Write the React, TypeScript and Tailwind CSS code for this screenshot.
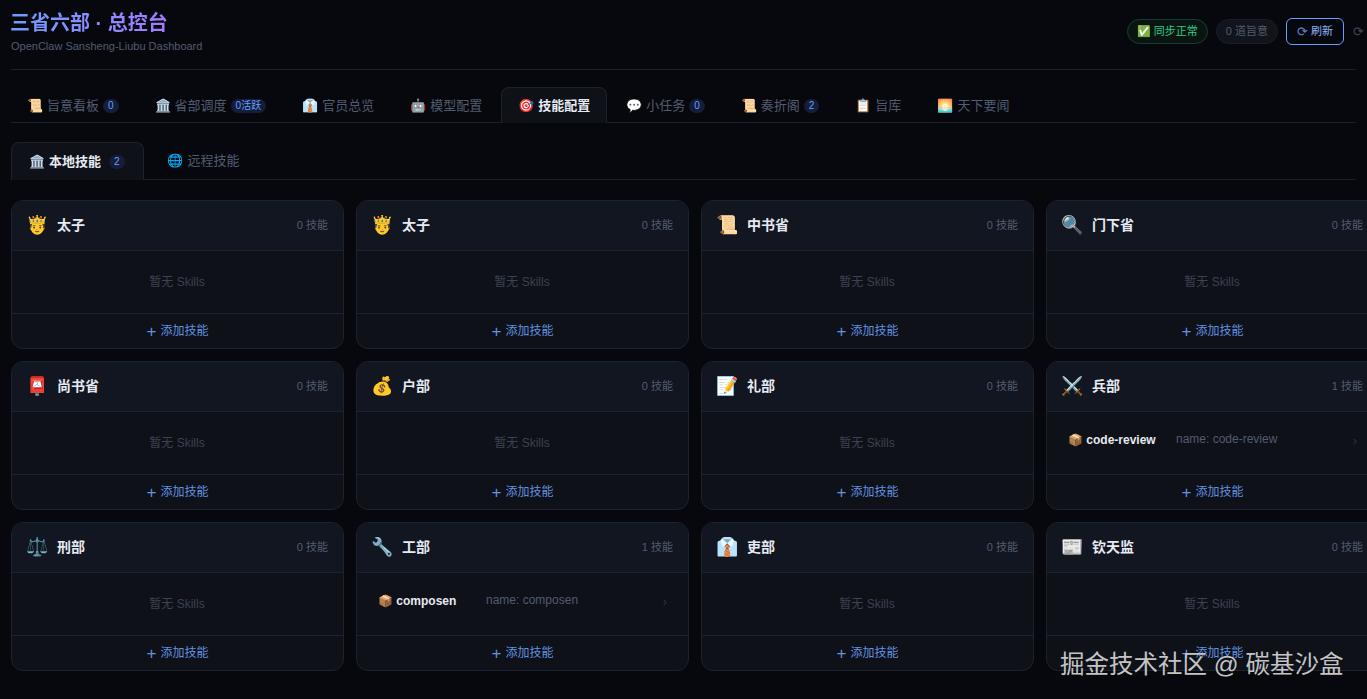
const FONT = '[font-family:"Liberation_Sans","Noto_Sans_CJK_SC",sans-serif]';

type Skill = { name: string; desc: string };
type Dept = { icon: string; name: string; skills: Skill[] };

const TABS = [
  { icon: '📜', label: '旨意看板', badge: '0' },
  { icon: '🏛️', label: '省部调度', badge: '0活跃' },
  { icon: '👔', label: '官员总览' },
  { icon: '🤖', label: '模型配置' },
  { icon: '🎯', label: '技能配置', active: true },
  { icon: '💬', label: '小任务', badge: '0' },
  { icon: '📜', label: '奏折阁', badge: '2' },
  { icon: '📋', label: '旨库' },
  { icon: '🌅', label: '天下要闻' },
];

const DEPTS: Dept[] = [
  { icon: '🤴', name: '太子', skills: [] },
  { icon: '🤴', name: '太子', skills: [] },
  { icon: '📜', name: '中书省', skills: [] },
  { icon: '🔍', name: '门下省', skills: [] },
  { icon: '📮', name: '尚书省', skills: [] },
  { icon: '💰', name: '户部', skills: [] },
  { icon: '📝', name: '礼部', skills: [] },
  { icon: '⚔️', name: '兵部', skills: [{ name: 'code-review', desc: 'name: code-review' }] },
  { icon: '⚖️', name: '刑部', skills: [] },
  { icon: '🔧', name: '工部', skills: [{ name: 'composen', desc: 'name: composen' }] },
  { icon: '👔', name: '吏部', skills: [] },
  { icon: '📰', name: '钦天监', skills: [] },
];

const DeptCard = ({ dept }: { dept: Dept }) => (
  <div className="h-[149px] w-[333px] rounded-xl border border-[#1c2230] bg-[#0e1118] overflow-hidden flex flex-col">
    <div className="h-[50px] shrink-0 flex items-center px-[15px] pb-[1px] bg-[#121620] border-b border-[#1c2230]">
      <span className="-ml-px w-[31px] text-[18px] leading-none">{dept.icon}</span>
      <span className="text-sm font-bold text-[#e6eaf2]">{dept.name}</span>
      <span className="ml-auto text-[11px] text-[#525c70]">{dept.skills.length} 技能</span>
    </div>
    <div className="h-[62px] shrink-0 flex flex-col justify-center">
      {dept.skills.length === 0 ? (
        <div className="text-center pr-[1px] text-xs text-[#3b4250]">暂无 Skills</div>
      ) : (
        dept.skills.map((s) => (
          <div key={s.name} className="flex items-center pl-[21px] pr-[21px] pb-[7px]">
            <span className="text-xs font-bold text-[#e6eaf2] w-[108px] shrink-0 whitespace-nowrap">
              📦 {s.name}
            </span>
            <span className="text-xs text-[#525c70] -mt-[2px]">{s.desc}</span>
            <span className="ml-auto text-xs text-[#2f3644] mt-[3px]">›</span>
          </div>
        ))
      )}
    </div>
    <div className="flex-1 flex items-center justify-center gap-1 border-t border-[#1c2230] text-xs text-[#6391e0]">
      <span className="text-[17px] leading-none font-light">+</span>
      <span>添加技能</span>
    </div>
  </div>
);

const App = () => {
  return (
    <div className={`relative h-[699px] w-[1367px] overflow-hidden bg-[#07080d] px-[11px] ${FONT}`}>
      {/* header */}
      <div className="h-[70px] flex items-start justify-between border-b border-[#1c2028]">
        <div>
          <h1 className="mt-[8px] -ml-px text-[20px] leading-[30px] font-bold bg-gradient-to-r from-[#6a9eff] to-[#a07aff] bg-clip-text text-transparent w-fit">
            三省六部 · 总控台
          </h1>
          <p className="mt-[1px] text-[11px] leading-[14px] text-[#525c70]">OpenClaw Sansheng-Liubu Dashboard</p>
        </div>
        <div className="mt-[18px] -mr-[6px] flex items-center text-[11px]">
          <span className="h-[25px] flex items-center rounded-full border border-[#123f31] bg-[#0a1512] px-[9px] text-[#2ecc8a]">
            ✅ 同步正常
          </span>
          <span className="ml-2 h-[25px] flex items-center rounded-full border border-[#1a1e28] bg-[#11141b] px-[9px] text-[#525c70]">
            0 道旨意
          </span>
          <span className="ml-2 h-[27px] flex items-center gap-[5px] rounded-md border border-[#6a9eff] px-[10px] text-[#8fb4f5]">
            <span className="w-[9px] text-[13px] leading-none text-[#5f83c8]">⟳</span>
            <span>刷新</span>
          </span>
          <span className="ml-[9px] w-[9px] text-[13px] leading-none text-[#414959]">⟳</span>
        </div>
      </div>

      {/* main tabs */}
      <div className="mt-[17px] flex gap-[2px] border-b border-[#1c2028] h-[36px] items-end">
        {TABS.map((t) => (
          <div
            key={t.label}
            className={`h-[36px] -mb-px first:-ml-px flex items-center gap-1 px-[16px] text-[13px] border border-b-0 rounded-t-lg whitespace-nowrap ${
              t.active ? 'bg-[#0e1118] border-[#1c2230] text-[#e6eaf2] font-bold' : 'border-transparent text-[#525c70]'
            }`}
          >
            <span>{t.icon}</span>
            <span>{t.label}</span>
            {t.badge && (
              <span className="rounded-full bg-[#141d3a] px-[5px] text-[10px] leading-[14px] text-[#6a9eff]">{t.badge}</span>
            )}
          </div>
        ))}
      </div>

      {/* sub tabs */}
      <div className="mt-[19px] flex border-b border-[#1c2028] h-[38px] items-end">
        <div className="h-[38px] -mb-px flex items-center gap-1 pl-[17px] pr-[18px] text-[13px] font-bold text-[#e6eaf2] bg-[#0e1118] border border-b-0 border-[#1c2230] rounded-t-lg">
          <span>🏛️</span>
          <span>本地技能</span>
          <span className="ml-1 rounded-full bg-[#141d3a] px-[5px] text-[10px] leading-[14px] font-normal text-[#6a9eff]">2</span>
        </div>
        <div className="h-[38px] -mb-px flex items-center gap-[5px] px-[23px] text-[13px] text-[#525c70]">
          <span>🌐</span>
          <span>远程技能</span>
        </div>
      </div>

      {/* cards */}
      <div className="mt-[20px] grid grid-cols-[repeat(4,333px)] gap-3">
        {DEPTS.map((d, i) => (
          <DeptCard key={i} dept={d} />
        ))}
      </div>

      {/* watermark */}
      <div className="absolute left-[1060px] top-[648px] text-[24.5px] leading-[34px] text-[#c4c4c4] whitespace-nowrap">
        掘金技术社区 @ 碳基沙盒
      </div>
    </div>
  );
};

export default App;
